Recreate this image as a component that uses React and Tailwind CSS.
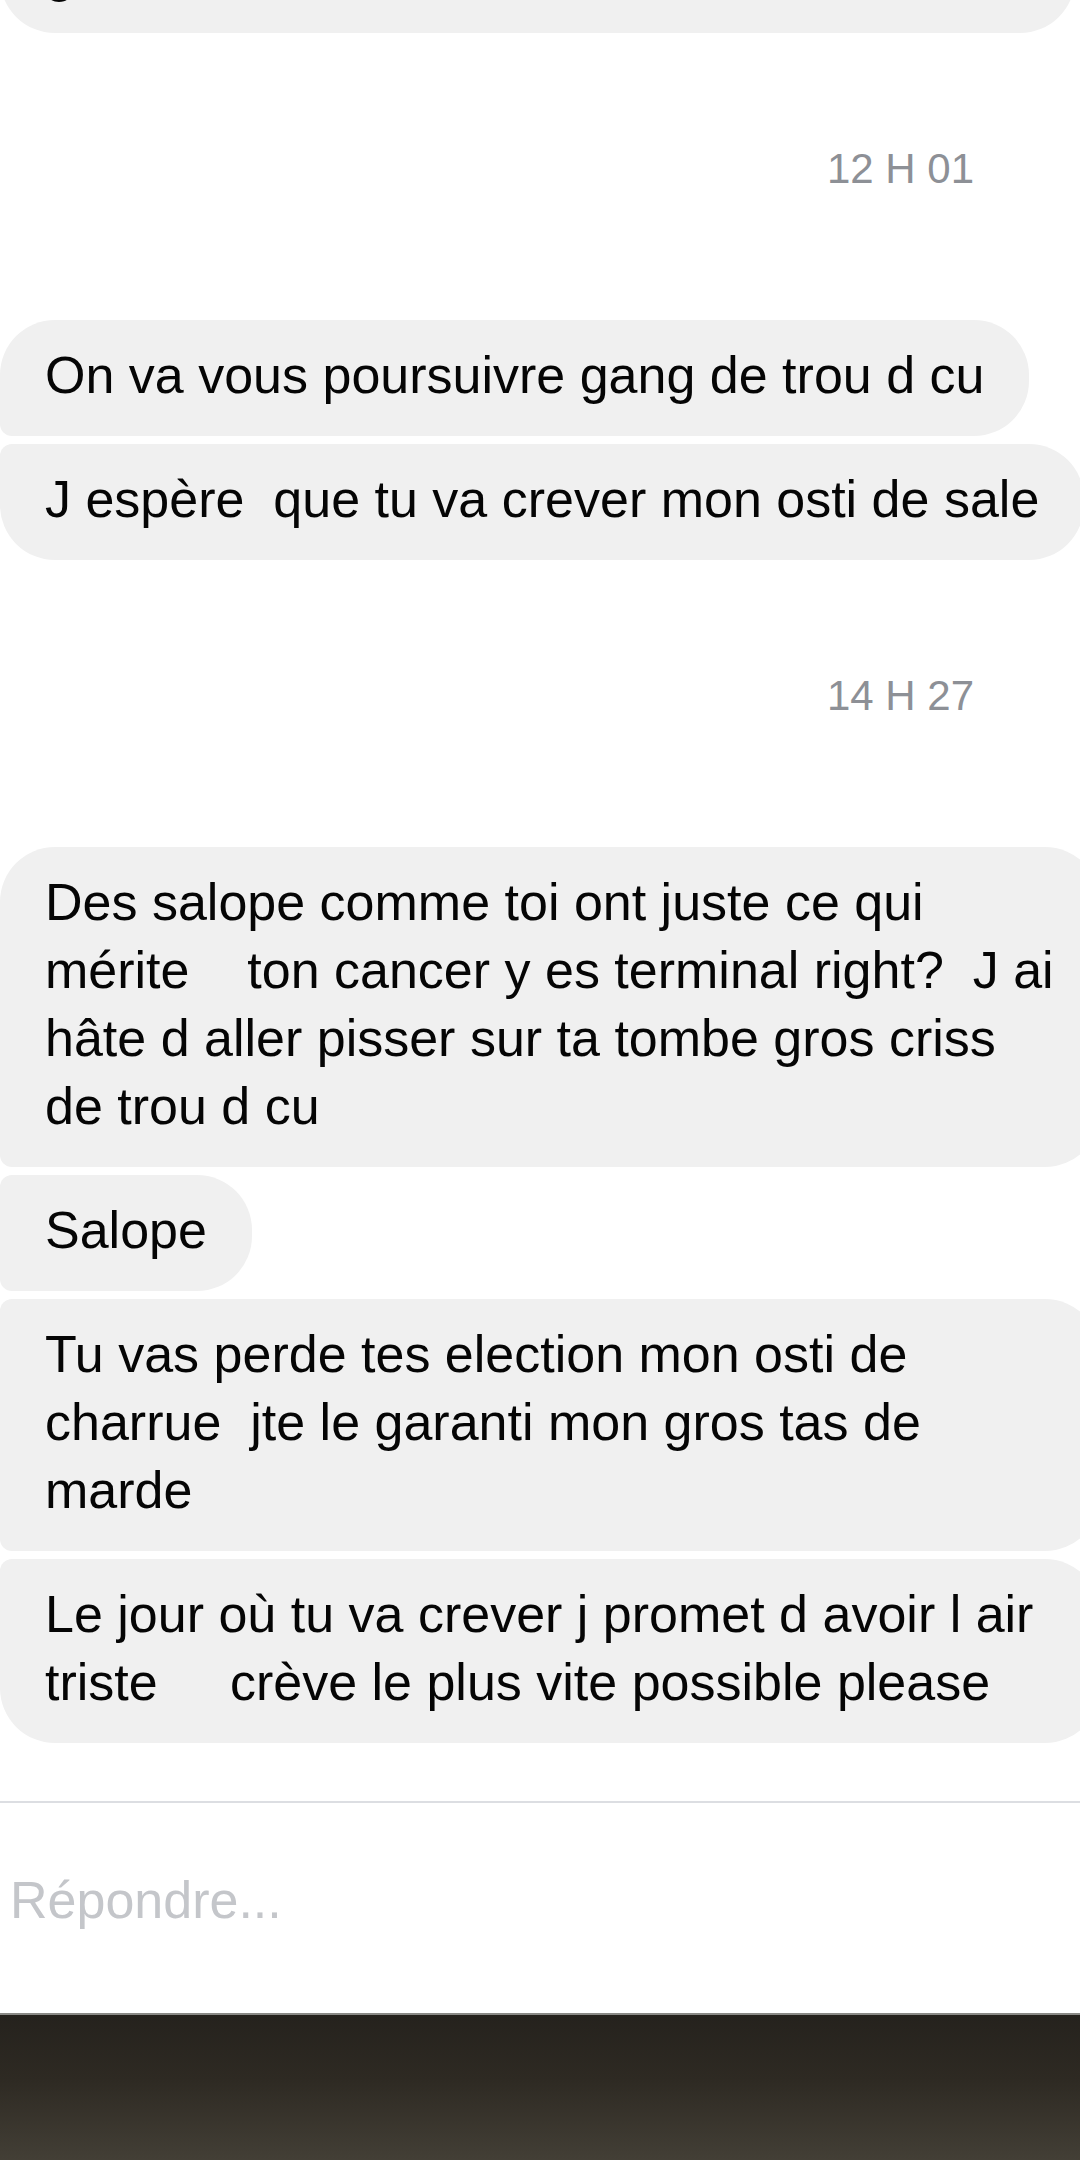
export default function App() {
  const font = { fontFamily: '"Liberation Sans", Arial, sans-serif' };
  const Bubble = ({ children, tl = "55px", bl = "55px" }) => (
    <div
      className="w-fit max-w-[1100px] bg-[#f0f0f0] pl-[45px] pr-[45px] pt-[21px] pb-[27px] text-[52px] leading-[68px] text-[#050505] whitespace-pre-wrap"
      style={{ borderRadius: `${tl} 55px 55px ${bl}` }}
    >
      {children}
    </div>
  );
  const Time = ({ children }) => (
    <div className="flex justify-end pr-[146px] text-[42px] leading-[50px] text-[#8d9096] mt-[111px] mb-[126px]">
      {children}
    </div>
  );
  return (
    <div className="w-[1080px] h-[2160px] overflow-hidden bg-white flex flex-col" style={font}>
      <div className="w-[1120px] flex flex-col">
        <div className="mt-[-82px] w-[1075px] bg-[#f0f0f0] pl-[45px] pt-[21px] pb-[26px] text-[52px] leading-[68px] text-[#050505] rounded-[55px]">
          g
        </div>
        <Time>12 H 01</Time>
        <div className="flex flex-col gap-[8px]">
          <Bubble bl="12px">On va vous poursuivre gang de trou d cu</Bubble>
          <Bubble tl="12px">J espère  que tu va crever mon osti de sale</Bubble>
        </div>
        <Time>14 H 27</Time>
        <div className="flex flex-col gap-[8px]">
          <Bubble bl="12px">Des salope comme toi ont juste ce qui mérite    ton cancer y es terminal right?  J ai hâte d aller pisser sur ta tombe gros criss de trou d cu</Bubble>
          <Bubble tl="12px" bl="12px">Salope</Bubble>
          <Bubble tl="12px" bl="12px">Tu vas perde tes election mon osti de charrue  jte le garanti mon gros tas de marde</Bubble>
          <Bubble tl="12px">Le jour où tu va crever j promet d avoir l air triste     crève le plus vite possible please</Bubble>
        </div>
      </div>
      <div className="mt-[58px] h-[2px] bg-[#dcdee2]" />
      <div className="flex-1 flex items-start pl-[10px] pt-[64px] text-[52px] leading-[66px] text-[#c4c6ca]">
        Répondre...
      </div>
      <div className="h-[147px] border-t-2 border-[#8a8a86] bg-[linear-gradient(180deg,#25221d_0%,#2e2a23_45%,#433f36_100%)]" />
    </div>
  );
}
